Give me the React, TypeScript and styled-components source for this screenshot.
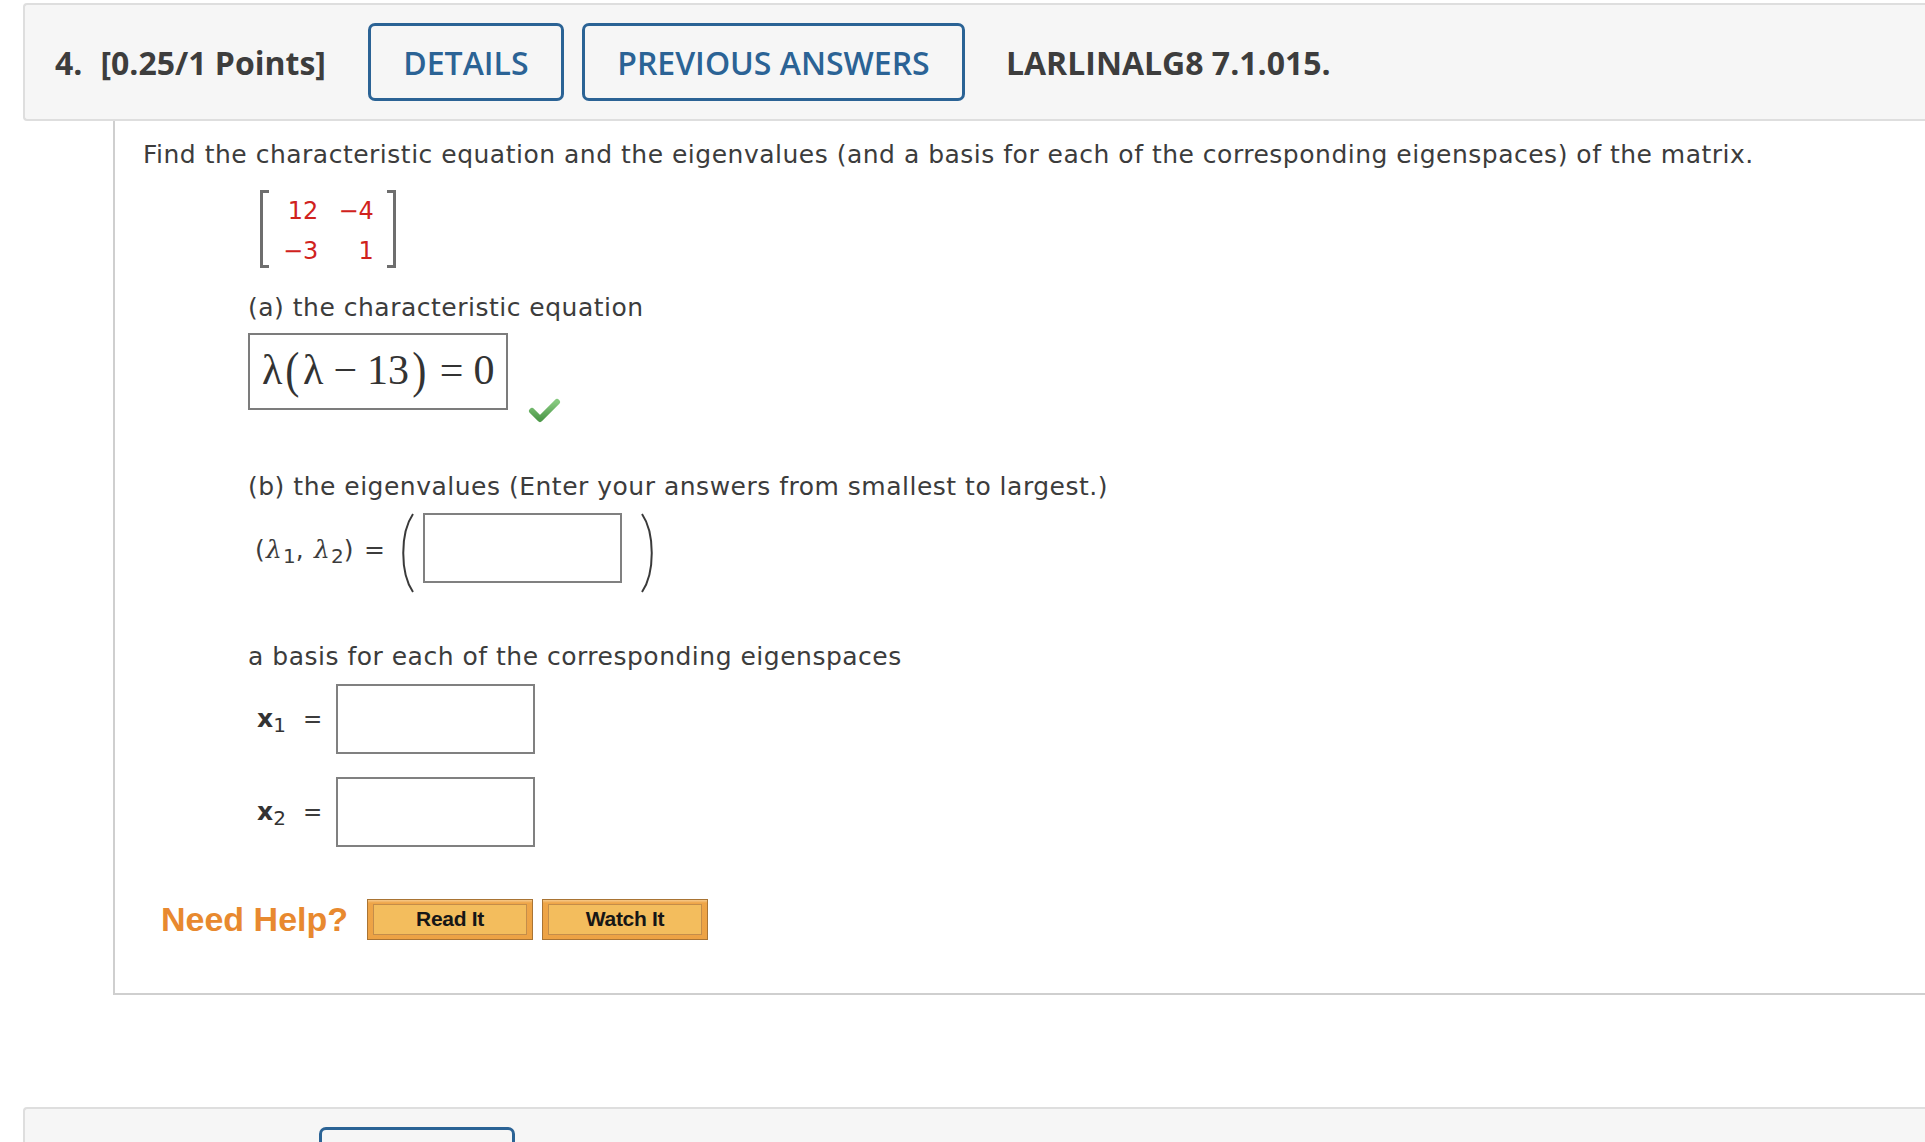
import React from "react";
import styled, { createGlobalStyle } from "styled-components";

const GlobalStyle = createGlobalStyle`
  html, body {
    margin: 0;
    padding: 0;
    background: #ffffff;
    overflow: hidden;
  }
  body {
    font-family: "DejaVu Sans", Verdana, sans-serif;
    color: #3c3c3c;
  }
`;

const Page = styled.div`
  padding: 3px 0 0 23px;
  display: flex;
  flex-direction: column;
`;

const QuestionHeader = styled.div<{ $gapTop?: number; $pl?: number }>`
  display: flex;
  align-items: center;
  height: 114px;
  margin-top: ${(p) => p.$gapTop ?? 0}px;
  padding-left: ${(p) => p.$pl ?? 30}px;
  background: #f6f6f6;
  border: 2px solid #dedede;
  border-right: none;
  border-radius: 4px 0 0 4px;
  font-family: "Open Sans", "Liberation Sans", sans-serif;
`;

const HeaderTitle = styled.div`
  font-size: 32px;
  font-weight: 700;
  color: #3d3d3d;
  white-space: nowrap;
  margin-right: 42px;
`;

const Num = styled.span`
  margin-right: 18px;
`;

const OutlineButton = styled.button<{ $w: number }>`
  box-sizing: border-box;
  width: ${(p) => p.$w}px;
  height: 78px;
  margin-right: 18px;
  background: transparent;
  border: 3px solid #2b6395;
  border-radius: 7px;
  color: #2b6395;
  font-family: "Open Sans", "Liberation Sans", sans-serif;
  font-size: 32px;
  font-weight: 600;
  padding: 0;
  white-space: nowrap;
`;

const Reference = styled.div`
  font-size: 32px;
  font-weight: 700;
  color: #3d3d3d;
  margin-left: 23px;
  white-space: nowrap;
`;

const QuestionBody = styled.div`
  margin-left: 90px;
  border-left: 2px solid #cfcfcf;
  border-bottom: 2px solid #cfcfcf;
  padding: 19px 0 54px 28px;
  display: flex;
  flex-direction: column;
  align-items: flex-start;
  font-size: 25px;
  letter-spacing: 0.5px;
  line-height: 30px;
`;

const Prompt = styled.div`
  white-space: nowrap;
`;

const MatrixWrap = styled.div`
  display: flex;
  align-items: stretch;
  margin: 20px 0 0 117px;
  height: 78px;
  letter-spacing: 0;
`;

const Bracket = styled.div<{ $side: "left" | "right" }>`
  width: 6px;
  border: 3px solid #6e6e6e;
  ${(p) => (p.$side === "left" ? "border-right: none;" : "border-left: none;")}
`;

const MatrixGrid = styled.div`
  display: grid;
  grid-template-columns: auto auto;
  grid-auto-rows: 40px;
  column-gap: 20px;
  padding: 1px 13px 0 14px;
  align-items: center;
  color: #d0221d;
  font-size: 24px;
`;

const Cell = styled.span`
  text-align: right;
`;

const PartLabel = styled.div<{ $mt: number; $ml?: number }>`
  margin-top: ${(p) => p.$mt}px;
  margin-left: ${(p) => p.$ml ?? 105}px;
  white-space: nowrap;
`;

const AnswerRow = styled.div`
  display: flex;
  align-items: flex-end;
  margin: 10px 0 0 105px;
`;

const EquationBox = styled.div`
  box-sizing: border-box;
  width: 260px;
  height: 77px;
  border: 2px solid #7c7c7c;
  display: flex;
  align-items: center;
  padding: 0 0 4px 12px;
  font-family: "Liberation Serif", "DejaVu Serif", serif;
  font-size: 42px;
  letter-spacing: 0;
  color: #333;
  white-space: nowrap;
`;

const BigParen = styled.span`
  display: inline-block;
  font-size: 50px;
  transform: scaleX(0.85);
  margin: 0 2px;
`;

const MathOp = styled.span`
  margin: 0 10px;
`;

const CheckIcon = styled.svg`
  width: 33px;
  height: 26px;
  margin: 0 0 -14px 20px;
`;

const EigenRow = styled.div`
  display: flex;
  align-items: flex-start;
  margin: 11px 0 0 112px;
  height: 80px;
`;

const MathLabel = styled.span`
  font-size: 25px;
  letter-spacing: 1.2px;
  white-space: nowrap;
  margin: 22px 12px 0 0;
`;

const Lam = styled.i`
  font-family: "DejaVu Serif", "Liberation Serif", serif;
  font-style: italic;
`;

const Sub = styled.sub`
  font-size: 20px;
  font-weight: 400;
  vertical-align: -5px;
  line-height: 0;
  letter-spacing: 0;
`;

const ParenSvg = styled.svg`
  width: 17px;
  height: 80px;
  flex: none;
`;

const AnswerInput = styled.div<{ $ml: number; $mr?: number }>`
  box-sizing: border-box;
  width: 199px;
  height: 70px;
  border: 2px solid #808080;
  background: #fff;
  margin-left: ${(p) => p.$ml}px;
  margin-right: ${(p) => p.$mr ?? 0}px;
`;

const VectorRow = styled.div<{ $mt: number }>`
  display: flex;
  align-items: center;
  margin: ${(p) => p.$mt}px 0 0 114px;
`;

const VecName = styled.span`
  font-weight: 700;
  font-size: 25px;
  color: #333;
  width: 46px;
  letter-spacing: 0;
  white-space: nowrap;
`;

const Equals = styled.span`
  font-size: 23px;
  width: 33px;
`;

const HelpRow = styled.div`
  display: flex;
  align-items: center;
  margin: 52px 0 0 18px;
  height: 40px;
  letter-spacing: 0;
`;

const NeedHelp = styled.span`
  font-family: "Liberation Sans", Arial, sans-serif;
  font-size: 34px;
  font-weight: 700;
  color: #e8892f;
  margin-right: 19px;
  white-space: nowrap;
`;

const HelpButton = styled.button`
  box-sizing: border-box;
  width: 166px;
  height: 41px;
  margin-right: 9px;
  padding: 4px 5px;
  border: 1px solid #a97434;
  background: linear-gradient(#f6c98a 0, #eea548 3px, #eda244 100%);
  display: flex;
`;

const HelpInner = styled.span`
  flex: 1;
  display: flex;
  align-items: center;
  justify-content: center;
  border: 1px solid #c48d4a;
  background: #f3bd5d;
  font-family: "Liberation Sans", Arial, sans-serif;
  font-weight: 700;
  font-size: 21px;
  letter-spacing: -0.3px;
  color: #161616;
`;

const Paren = ({ side }: { side: "left" | "right" }) => (
  <ParenSvg viewBox="0 0 17 80">
    <path
      d={side === "left" ? "M15 1 C2 20 2 60 15 79" : "M2 1 C15 20 15 60 2 79"}
      fill="none"
      stroke="#3a3a3a"
      strokeWidth="2"
    />
  </ParenSvg>
);

export default function App() {
  return (
    <>
      <GlobalStyle />
      <Page>
        <QuestionHeader>
          <HeaderTitle>
            <Num>4.</Num>[0.25/1 Points]
          </HeaderTitle>
          <OutlineButton $w={196}>DETAILS</OutlineButton>
          <OutlineButton $w={383}>PREVIOUS ANSWERS</OutlineButton>
          <Reference>LARLINALG8 7.1.015.</Reference>
        </QuestionHeader>

        <QuestionBody>
          <Prompt>
            Find the characteristic equation and the eigenvalues (and a basis for each of the
            corresponding eigenspaces) of the matrix.
          </Prompt>

          <MatrixWrap>
            <Bracket $side="left" />
            <MatrixGrid>
              <Cell>12</Cell>
              <Cell>−4</Cell>
              <Cell>−3</Cell>
              <Cell>1</Cell>
            </MatrixGrid>
            <Bracket $side="right" />
          </MatrixWrap>

          <PartLabel $mt={25}>(a) the characteristic equation</PartLabel>
          <AnswerRow>
            <EquationBox>
              λ<BigParen>(</BigParen>λ<MathOp>−</MathOp>13<BigParen>)</BigParen>
              <MathOp>=</MathOp>0
            </EquationBox>
            <CheckIcon viewBox="0 0 33 26">
              <defs>
                <linearGradient id="chk" x1="0" y1="0" x2="0" y2="1">
                  <stop offset="0" stopColor="#86c97f" />
                  <stop offset="1" stopColor="#4f9a4b" />
                </linearGradient>
              </defs>
              <path
                d="M4 13 L12 21 L29 4"
                fill="none"
                stroke="url(#chk)"
                strokeWidth="6"
                strokeLinecap="round"
                strokeLinejoin="round"
              />
            </CheckIcon>
          </AnswerRow>

          <PartLabel $mt={62}>(b) the eigenvalues (Enter your answers from smallest to largest.)</PartLabel>
          <EigenRow>
            <MathLabel>
              (<Lam>λ</Lam>
              <Sub>1</Sub>, <Lam>λ</Lam>
              <Sub>2</Sub>) =
            </MathLabel>
            <Paren side="left" />
            <AnswerInput $ml={8} $mr={18} />
            <Paren side="right" />
          </EigenRow>

          <PartLabel $mt={49}>a basis for each of the corresponding eigenspaces</PartLabel>
          <VectorRow $mt={12}>
            <VecName>
              x<Sub>1</Sub>
            </VecName>
            <Equals>=</Equals>
            <AnswerInput $ml={0} />
          </VectorRow>
          <VectorRow $mt={23}>
            <VecName>
              x<Sub>2</Sub>
            </VecName>
            <Equals>=</Equals>
            <AnswerInput $ml={0} />
          </VectorRow>

          <HelpRow>
            <NeedHelp>Need Help?</NeedHelp>
            <HelpButton>
              <HelpInner>Read It</HelpInner>
            </HelpButton>
            <HelpButton>
              <HelpInner>Watch It</HelpInner>
            </HelpButton>
          </HelpRow>
        </QuestionBody>

        <QuestionHeader $gapTop={112} $pl={294}>
          <OutlineButton $w={196} aria-label="DETAILS" />
        </QuestionHeader>
      </Page>
    </>
  );
}
